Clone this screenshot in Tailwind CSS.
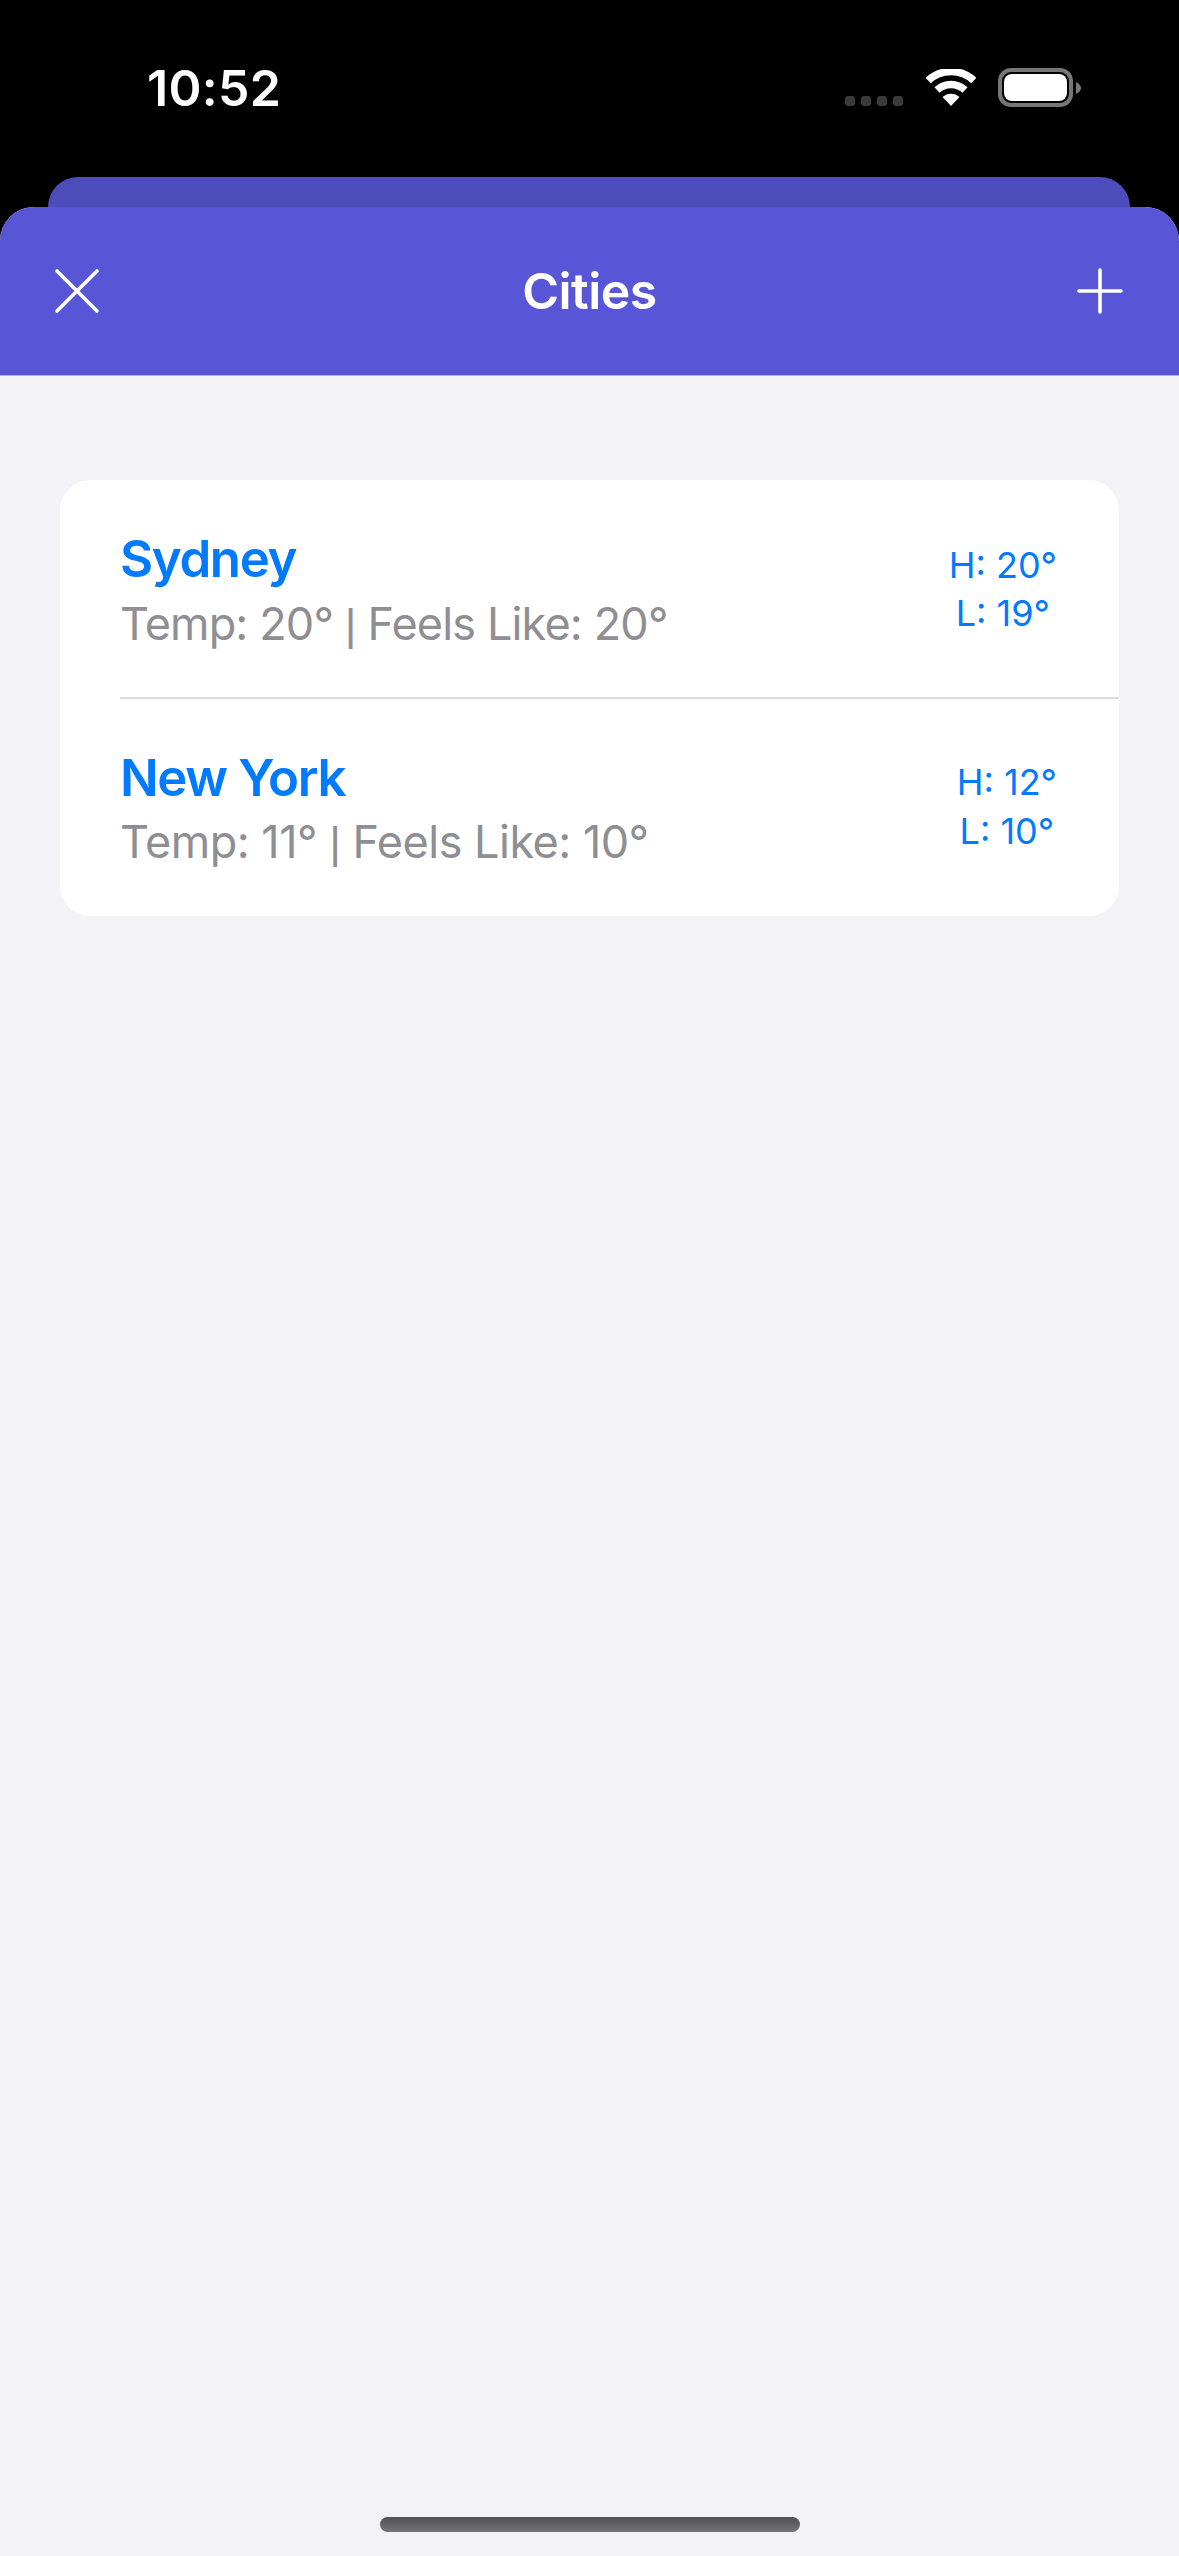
<!DOCTYPE html>
<html lang="en">
<head>
  <meta charset="UTF-8"/>
  <meta name="viewport" content="width=device-width,initial-scale=1"/>
  <title>Cities</title>
  <script src="https://cdn.jsdelivr.net/npm/@tailwindcss/browser@4"></script>
</head>
<body class="bg-black font-['Inter',sans-serif]">
  <div class="flex flex-col w-[1179px] h-[2556px]">

    <!-- Status bar -->
    <div class="h-[177px] shrink-0 flex items-start pl-[147px] pr-[98px] pt-[60px] text-white">
      <span class="text-[50px] leading-[56px] font-semibold tracking-[0.3px]">10:52</span>
      <div class="ml-auto flex items-end pt-[8px]">
        <div class="flex gap-[6px] mb-[1px]">
          <div class="w-[10px] h-[10px] rounded-[3px] bg-[#3a3a3a]"></div>
          <div class="w-[10px] h-[10px] rounded-[3px] bg-[#3a3a3a]"></div>
          <div class="w-[10px] h-[10px] rounded-[3px] bg-[#3a3a3a]"></div>
          <div class="w-[10px] h-[10px] rounded-[3px] bg-[#3a3a3a]"></div>
        </div>
        <svg class="ml-[23px] mb-[1px]" width="50" height="37" viewBox="0 0 50 37" fill="none" stroke="white" stroke-width="7.5">
          <path d="M2.2 11.5A33.5 33.5 0 0 1 47.8 11.5"/>
          <path d="M11 21A20.5 20.5 0 0 1 39 21"/>
          <path d="M25 37L16.5 28A12.5 12.5 0 0 1 33.5 28Z" fill="white" stroke="none"/>
        </svg>
        <div class="ml-[22px] flex items-center">
          <div class="w-[75px] h-[39px] rounded-[13px] border-[4px] border-[#777777] p-[2px]">
            <div class="w-full h-full rounded-[8px] bg-white"></div>
          </div>
          <svg class="ml-[3px]" width="5" height="12" viewBox="0 0 5 12"><path d="M0 0C3 1.5 5 3.5 5 6C5 8.5 3 10.5 0 12Z" fill="#777777"/></svg>
        </div>
      </div>
    </div>

    <!-- Sheet behind -->
    <div class="h-[30px] shrink-0 mx-[48px] w-[1082px] rounded-t-[30px] bg-[#4c4cba]"></div>

    <!-- Sheet -->
    <div class="flex-1 flex flex-col rounded-t-[34px] bg-[#f2f2f7] overflow-hidden">
      <header class="relative h-[169px] shrink-0 bg-[#5856d6] border-b border-[#b2b2c4] flex items-start justify-between pl-[54px] pr-[55px] pt-[61px]">
        <svg width="46" height="46" viewBox="0 0 46 46" fill="none" stroke="white" stroke-width="3.6" stroke-linecap="round">
          <path d="M3 3L43 43M43 3L3 43"/>
        </svg>
        <h1 class="absolute left-0 right-0 top-[54px] text-center text-white text-[50px] leading-[60px] font-semibold tracking-[-0.5px]">Cities</h1>
        <svg class="-mt-[1px]" width="48" height="48" viewBox="0 0 48 48" fill="none" stroke="white" stroke-width="3.6" stroke-linecap="round">
          <path d="M24 3V45M3 24H45"/>
        </svg>
      </header>

      <!-- City list -->
      <div class="mt-[104px] mx-[60px] w-[1059px] rounded-[30px] bg-white">
        <div class="h-[217px] flex items-start pl-[60px] pr-[62px] pt-[49px]">
          <div class="flex-1">
            <div class="text-[51px] leading-[60px] font-semibold tracking-[-1.4px] text-[#007aff]">Sydney</div>
            <div class="mt-[5px] text-[45px] leading-[60px] tracking-[-0.85px] text-[#8e8e93]">Temp: 20° <span class="font-['Liberation_Sans',sans-serif]">|</span> Feels Like: 20°</div>
          </div>
          <div class="pt-[12px] text-center text-[36px] leading-[48px] text-[#007aff]">
            <div>H: 20°</div>
            <div>L: 19°</div>
          </div>
        </div>
        <div class="ml-[60px] h-[2px] bg-[#dcdcde]"></div>
        <div class="h-[217px] flex items-start pl-[60px] pr-[62px] pt-[49px]">
          <div class="flex-1">
            <div class="text-[51px] leading-[60px] font-semibold tracking-[-1.4px] text-[#007aff]">New York</div>
            <div class="mt-[4px] text-[45px] leading-[60px] tracking-[-0.5px] text-[#8e8e93]">Temp: 11° <span class="font-['Liberation_Sans',sans-serif]">|</span> Feels Like: 10°</div>
          </div>
          <div class="pt-[10px] text-center text-[36px] leading-[49px] text-[#007aff]">
            <div>H: 12°</div>
            <div>L: 10°</div>
          </div>
        </div>
      </div>

      <!-- Home indicator -->
      <div class="mt-auto mb-[24px] mx-auto w-[420px] h-[15px] rounded-[8px] bg-gradient-to-b from-[#505055] to-[#757578]"></div>
    </div>
  </div>
</body>
</html>
